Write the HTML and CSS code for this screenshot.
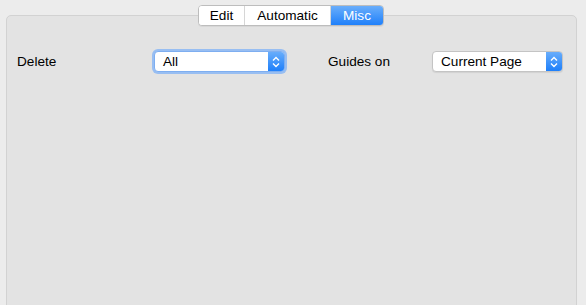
FILE: index.html
```html
<!DOCTYPE html>
<html lang="en">
<head>
    <meta charset="UTF-8">
    <title>Preferences</title>
    <link rel="stylesheet" href="styles.css">
</head>
<body>
    <div class="window">
        <div class="tabs">
            <button class="tab">Edit</button>
            <button class="tab">Automatic</button>
            <button class="tab active">Misc</button>
        </div>

        <div class="panel">
            <div class="form-row">
                <label class="field-label">Delete</label>
                <div class="popup focused">
                    <span class="popup-value">All</span>
                    <span class="popup-arrows">
                        <svg width="8" height="12" viewBox="0 0 8 12">
                            <path d="M1 4.5 L4 1.5 L7 4.5 M1 7.5 L4 10.5 L7 7.5" fill="none" stroke="#fff" stroke-width="1.4"/>
                        </svg>
                    </span>
                </div>
                <label class="field-label guides">Guides on</label>
                <div class="popup">
                    <span class="popup-value">Current Page</span>
                    <span class="popup-arrows">
                        <svg width="8" height="12" viewBox="0 0 8 12">
                            <path d="M1 4.5 L4 1.5 L7 4.5 M1 7.5 L4 10.5 L7 7.5" fill="none" stroke="#fff" stroke-width="1.4"/>
                        </svg>
                    </span>
                </div>
            </div>
        </div>
    </div>
</body>
</html>
```

FILE: styles.css
```css
* {
    margin: 0;
    padding: 0;
    box-sizing: border-box;
}

body {
    font-family: "Liberation Sans", Arial, sans-serif;
    font-size: 13.6px;
    color: #000;
    background: #ececec;
    height: 305px;
    overflow: hidden;
}

.window {
    padding: 5px 9px 0 6px;
}

.tabs {
    position: relative;
    z-index: 1;
    display: flex;
    width: 186px;
    height: 21px;
    margin-left: 192px;
    border: 1px solid #bdbdbd;
    border-radius: 4px;
    background: #fff;
    overflow: hidden;
    box-shadow: 0 1px 0 rgba(0, 0, 0, 0.05);
}

.tab {
    font-family: inherit;
    font-size: 13.6px;
    background: #fff;
    border: none;
    border-right: 1px solid #d6d6d6;
    color: #000;
    height: 19px;
    line-height: 19px;
    text-align: center;
}

.tab:nth-child(1) {
    width: 46px;
}

.tab:nth-child(2) {
    width: 86px;
}

.tab.active {
    flex: 1;
    border-right: none;
    color: #fff;
    background: linear-gradient(#6aaefb, #1f80fa);
}

.panel {
    margin-top: -11px;
    height: 300px;
    background: #e3e3e3;
    border: 1px solid #d2d2d2;
    border-radius: 5px;
    padding: 35px 0 0 10px;
}

.form-row {
    display: grid;
    grid-template-columns: 137px 131px 43px 104px 131px;
    align-items: center;
}

.guides {
    grid-column: 4;
}

.popup {
    display: flex;
    align-items: center;
    height: 21px;
    background: #fff;
    border: 1px solid #c4c4c4;
    border-radius: 4px;
    overflow: hidden;
    box-shadow: 0 1px 1px rgba(0, 0, 0, 0.08);
}

.popup.focused {
    border-color: #7eaef0;
    box-shadow: 0 0 0 2px #98bef2;
}

.popup-value {
    flex: 1;
    padding-left: 8px;
}

.popup-arrows {
    display: flex;
    align-items: center;
    justify-content: center;
    width: 16px;
    height: 100%;
    background: linear-gradient(#68adfb, #1e7ffa);
}
```
